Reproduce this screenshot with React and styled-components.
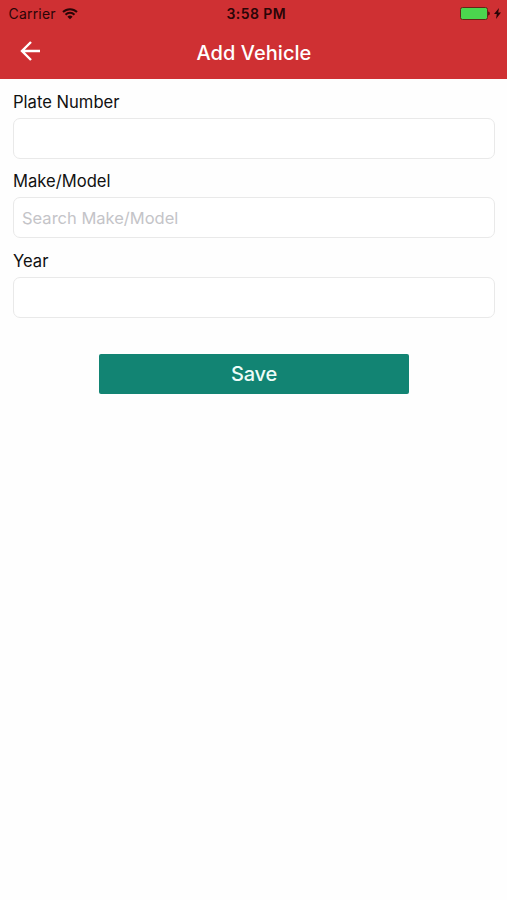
import { useState } from "react";
import styled, { createGlobalStyle } from "styled-components";

const GlobalStyle = createGlobalStyle`
  * {
    box-sizing: border-box;
  }
  body {
    margin: 0;
    background-color: #fefefe;
    font-family: Inter, "Liberation Sans", sans-serif;
  }
`;

const Wrapper = styled.div`
  display: flex;
  flex-direction: column;
  height: 900px;
  width: 507px;
  overflow: hidden;
  background-color: #fefefe;
`;

const Header = styled.header`
  height: 79px;
  background-color: #cf3033;
`;

const StatusBar = styled.div`
  display: grid;
  grid-template-columns: 1fr auto 1fr;
  align-items: center;
  height: 27px;
  padding: 0 6px 0 8.5px;
  color: #2a0507;
  font-size: 14px;
`;

const Carrier = styled.div`
  display: flex;
  align-items: center;
  gap: 6px;
  letter-spacing: 0.2px;
`;

const Time = styled.div`
  padding-left: 3px;
  font-size: 14px;
  font-weight: 600;
  letter-spacing: 0.4px;
`;

const Power = styled.div`
  display: flex;
  align-items: center;
  justify-content: flex-end;
  gap: 4px;
`;

const NavBar = styled.div`
  display: grid;
  grid-template-columns: 60px 1fr 60px;
  align-items: center;
  height: 52px;
  color: #fff;
`;

const BackButton = styled.button`
  display: flex;
  height: 48px;
  padding: 12px 0 0 20px;
  border: none;
  background-color: transparent;
  color: #fff;
  cursor: pointer;
`;

const Title = styled.h1`
  margin: 0;
  padding-left: 1px;
  font-size: 20px;
  font-weight: 500;
  letter-spacing: 0.05px;
  line-height: 50px;
  text-align: center;
`;

const Form = styled.form`
  display: flex;
  flex-direction: column;
  padding: 0 12px 0 13px;
`;

const Label = styled.label`
  display: flex;
  flex-direction: column;
  height: 79.4px;
  font-size: 16.6px;
  color: #111;
`;

const LabelText = styled.span`
  height: 39px;
  line-height: 47px;
`;

const Input = styled.input`
  width: 100%;
  height: 41px;
  flex-shrink: 0;
  padding: 0 8px;
  border: 1px solid #e9e9e9;
  border-radius: 7px;
  outline: none;
  background-color: #fff;
  color: #111;
  font-family: inherit;
  font-size: 16.5px;

  &::placeholder {
    color: #c4c4c8;
    opacity: 1;
  }
`;

const SaveButton = styled.button`
  align-self: center;
  width: 310px;
  height: 40px;
  margin-top: 37px;
  padding: 0;
  border: none;
  border-radius: 2px;
  background-color: #128473;
  color: #eefcf8;
  font-family: inherit;
  font-size: 20px;
  font-weight: 500;
  letter-spacing: -0.2px;
  cursor: pointer;
`;

const WifiIcon = () => (
  <svg width="16" height="12" viewBox="0 0 16 12" fill="none" stroke="currentColor" strokeWidth="2">
    <path d="M1 4a10 10 0 0 1 14 0" />
    <path d="M3.5 6.7a6.3 6.3 0 0 1 9 0" />
    <path d="M8 11.3 5.4 8.7a3.7 3.7 0 0 1 5.2 0z" fill="currentColor" stroke="none" />
  </svg>
);

const BatteryIcon = () => (
  <svg width="30" height="13" viewBox="0 0 30 13">
    <rect x="0.5" y="0.5" width="27" height="12" rx="2" fill="#4bd64e" stroke="#642417" />
    <path d="M28.3 4.5c1.8.4 1.8 3.6 0 4z" fill="#2a0507" />
  </svg>
);

const BoltIcon = () => (
  <svg width="7" height="11" viewBox="0 0 7 11" fill="currentColor">
    <path d="M5 0 0 6h2.8L2 11l5-6.5H4.2z" />
  </svg>
);

const ArrowIcon = () => (
  <svg width="21" height="20" viewBox="0 0 21 20" fill="none" stroke="currentColor" strokeWidth="2.4">
    <path d="M20 10H2M11 1 2 10l9 9" />
  </svg>
);

const fields = [
  { name: "plateNumber", label: "Plate Number" },
  { name: "makeModel", label: "Make/Model", placeholder: "Search Make/Model" },
  { name: "year", label: "Year" },
];

const App = () => {
  const [state, setState] = useState({
    plateNumber: "",
    makeModel: "",
    year: "",
  });

  const onHandleInput = (e) => {
    setState({ ...state, [e.target.name]: e.target.value });
  };

  const onHandleSubmit = (e) => {
    e.preventDefault();
  };

  return (
    <Wrapper>
      <GlobalStyle />
      <Header>
        <StatusBar>
          <Carrier>
            Carrier
            <WifiIcon />
          </Carrier>
          <Time>3:58 PM</Time>
          <Power>
            <BatteryIcon />
            <BoltIcon />
          </Power>
        </StatusBar>
        <NavBar>
          <BackButton type="button" aria-label="Back">
            <ArrowIcon />
          </BackButton>
          <Title>Add Vehicle</Title>
        </NavBar>
      </Header>
      <Form onSubmit={onHandleSubmit}>
        {fields.map((field) => (
          <Label key={field.name}>
            <LabelText>{field.label}</LabelText>
            <Input
              name={field.name}
              value={state[field.name]}
              placeholder={field.placeholder}
              onChange={onHandleInput}
            />
          </Label>
        ))}
        <SaveButton type="submit">Save</SaveButton>
      </Form>
    </Wrapper>
  );
};

export default App;
